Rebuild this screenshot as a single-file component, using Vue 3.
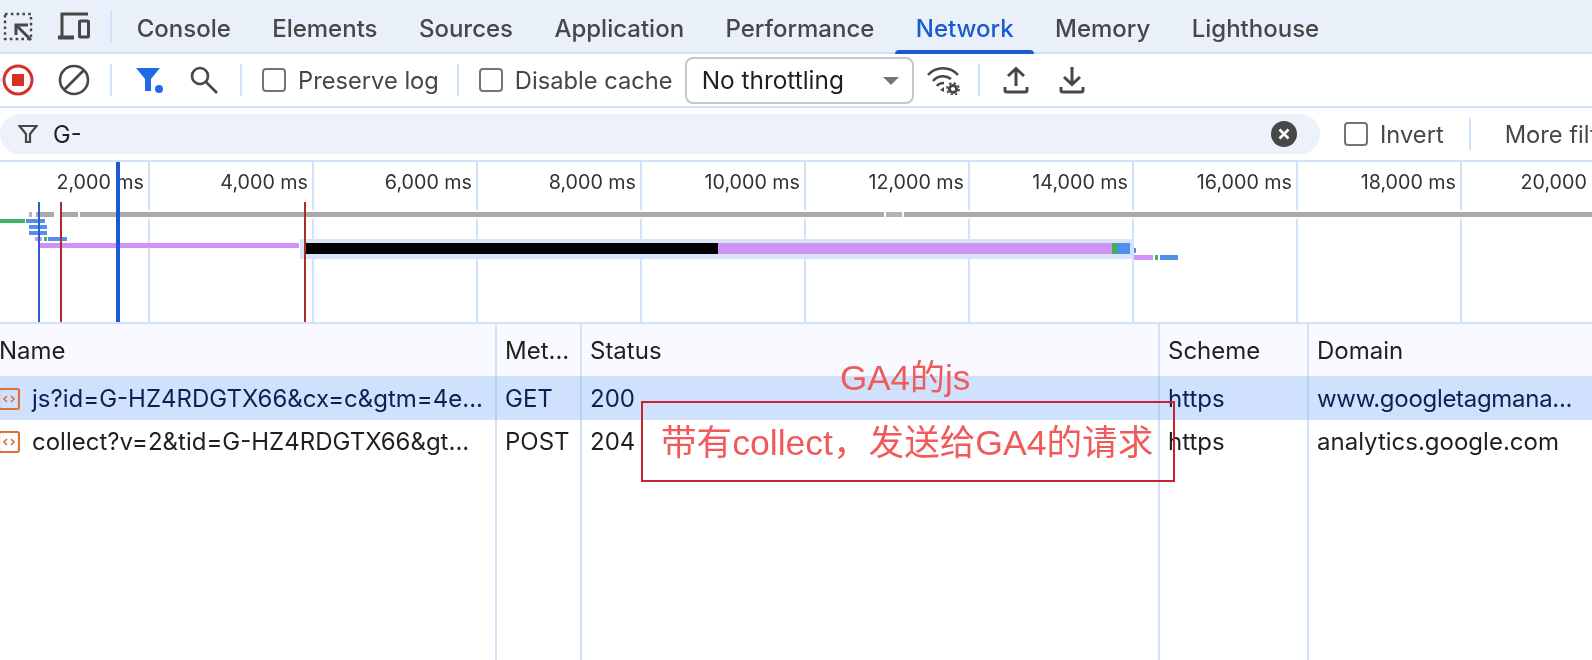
<script setup>
const tabs = ['Console', 'Elements', 'Sources', 'Application', 'Performance', 'Network', 'Memory', 'Lighthouse']
const gridLines = [148, 312, 476, 640, 804, 968, 1132, 1296, 1460]
const labels = ['2,000 ms', '4,000 ms', '6,000 ms', '8,000 ms', '10,000 ms', '12,000 ms', '14,000 ms', '16,000 ms', '18,000 ms', '20,000 ms']
const bars = [
  { x: 29, w: 3, y: 50, h: 5, c: '#b3b3b3' },
  { x: 36, w: 18, y: 50, h: 5, c: '#aaaaaa' },
  { x: 62, w: 16, y: 50, h: 5, c: '#aaaaaa' },
  { x: 80, w: 804, y: 50, h: 5, c: '#aaaaaa' },
  { x: 886, w: 16, y: 50, h: 5, c: '#b3b3b3' },
  { x: 904, w: 688, y: 50, h: 5, c: '#aaaaaa' },
  { x: 0, w: 25, y: 57, h: 4, c: '#3fb561' },
  { x: 26, w: 19, y: 57, h: 4, c: '#5390ea' },
  { x: 29, w: 18, y: 63, h: 4, c: '#5390ea' },
  { x: 29, w: 18, y: 69, h: 4, c: '#5390ea' },
  { x: 35, w: 7, y: 75, h: 4, c: '#d092f4' },
  { x: 44, w: 3, y: 75, h: 4, c: '#3fb561' },
  { x: 48, w: 19, y: 75, h: 4, c: '#5390ea' },
  { x: 40, w: 259, y: 81, h: 5, c: '#d092f4' },
  { x: 300, w: 832, y: 77, h: 20, c: '#d9e3f9' },
  { x: 306, w: 412, y: 81, h: 11, c: '#000000' },
  { x: 718, w: 394, y: 81, h: 11, c: '#d092f4' },
  { x: 1112, w: 6, y: 81, h: 11, c: '#3fae63' },
  { x: 1118, w: 12, y: 81, h: 11, c: '#4f8ff0' },
  { x: 1134, w: 2, y: 86, h: 5, c: '#5390ea' },
  { x: 1134, w: 19, y: 93, h: 5, c: '#d092f4' },
  { x: 1155, w: 3, y: 93, h: 5, c: '#3fb561' },
  { x: 1160, w: 18, y: 93, h: 5, c: '#5390ea' }
]
const markers = [
  { x: 38, w: 2, top: 40, c: '#2a5fc9' },
  { x: 60, w: 2, top: 40, c: '#ad2b2b' },
  { x: 304, w: 2, top: 40, c: '#ad2b2b' },
  { x: 116, w: 4, top: 0, c: '#1a5ccf' }
]
const columns = [
  { key: 'name', label: 'Name' },
  { key: 'method', label: 'Met...' },
  { key: 'status', label: 'Status' },
  { key: 'scheme', label: 'Scheme' },
  { key: 'domain', label: 'Domain' }
]
const rows = [
  { name: 'js?id=G-HZ4RDGTX66&cx=c&gtm=4e...', method: 'GET', status: '200', scheme: 'https', domain: 'www.googletagmana...', selected: true },
  { name: 'collect?v=2&tid=G-HZ4RDGTX66&gt...', method: 'POST', status: '204', scheme: 'https', domain: 'analytics.google.com', selected: false }
]
</script>

<template>
  <div class="page">
    <header class="tabbar">
      <svg class="ico first" width="36" height="36" viewBox="0 0 36 36" fill="none" stroke="#474747">
        <rect x="5" y="6" width="26" height="25" stroke-width="2.4" stroke-dasharray="2.6 3.2" />
        <path d="M31 32 L17 18" stroke-width="3" />
        <path d="M16 27 V17 H28" stroke-width="3" />
      </svg>
      <svg class="ico device" width="36" height="36" viewBox="0 0 36 36" fill="none" stroke="#474747">
        <path d="M6 29 V6 H32" stroke-width="3" />
        <path d="M2 29.5 H18" stroke-width="4" />
        <rect x="23.5" y="13" width="9" height="16" stroke-width="3" rx="1" />
      </svg>
      <span class="sep tab-sep"></span>
      <nav class="tabs">
        <span v-for="t in tabs" :key="t" class="tab" :class="{ active: t === 'Network' }">{{ t }}</span>
      </nav>
    </header>

    <div class="toolbar">
      <svg class="ico first" width="36" height="36" viewBox="0 0 36 36" fill="none">
        <circle cx="18" cy="18" r="14" stroke="#d0332b" stroke-width="3" />
        <rect x="12" y="12" width="12" height="12" fill="#d93025" />
      </svg>
      <svg class="ico device" width="36" height="36" viewBox="0 0 36 36" fill="none" stroke="#474747" stroke-width="2.6">
        <circle cx="18" cy="18" r="14" />
        <path d="M8 28 L28 8" />
      </svg>
      <span class="sep tab-sep"></span>
      <svg class="ico filter" width="30" height="30" viewBox="0 0 30 30">
        <path d="M2 3 H26 L17 14 V26 H11 V14 Z" fill="#1f6ae6" />
        <circle cx="25" cy="24" r="4" fill="#1f6ae6" />
      </svg>
      <svg class="ico search" width="30" height="30" viewBox="0 0 30 30" fill="none" stroke="#474747" stroke-width="2.6">
        <circle cx="12" cy="11" r="8" />
        <path d="M18 17 L29 28" />
      </svg>
      <span class="sep sep-a"></span>
      <label class="check check-a"><span class="box"></span>Preserve log</label>
      <span class="sep sep-b"></span>
      <label class="check check-b"><span class="box"></span>Disable cache</label>
      <div class="select">No throttling<span class="caret"></span></div>
      <svg class="ico wifi" width="34" height="30" viewBox="0 0 34 30" fill="none" stroke="#474747" stroke-width="2.6">
        <path d="M2 10 C10 1 24 1 32 10" />
        <path d="M7 16 C12 10 20 10 25 14" />
        <path d="M11 21 C13 18 16 18 18 18" />
        <path d="M18 22 L14 25 L18 27 Z" fill="#474747" stroke="none" />
        <circle cx="27" cy="24" r="3.6" stroke-width="3" />
        <circle cx="27" cy="24" r="6" stroke-width="1.8" stroke-dasharray="2.4 2.3" />
      </svg>
      <span class="sep sep-c"></span>
      <svg class="ico upload" width="26" height="28" viewBox="0 0 26 28" fill="none" stroke="#474747" stroke-width="3">
        <path d="M13 20 V3 M5 10 L13 2.5 L21 10" />
        <path d="M2 21 V24.5 Q2 26 4 26 H22 Q24 26 24 24.5 V21" />
      </svg>
      <svg class="ico download" width="26" height="28" viewBox="0 0 26 28" fill="none" stroke="#474747" stroke-width="3">
        <path d="M13 1 V18 M5 11 L13 18.5 L21 11" />
        <path d="M2 21 V24.5 Q2 26 4 26 H22 Q24 26 24 24.5 V21" />
      </svg>
    </div>

    <div class="filterbar">
      <div class="pill">
        <svg class="funnel" width="20" height="20" viewBox="0 0 20 20" fill="none" stroke="#474747" stroke-width="2.2">
          <path d="M1.5 2 H18.5 L12 10 V18 H8 V10 Z" />
        </svg>
        <span class="query">G-</span>
        <svg class="clear" width="26" height="26" viewBox="0 0 26 26">
          <circle cx="13" cy="13" r="13" fill="#474747" />
          <path d="M8.5 8.5 L17.5 17.5 M17.5 8.5 L8.5 17.5" stroke="#fff" stroke-width="2.6" />
        </svg>
      </div>
      <label class="check check-c"><span class="box"></span>Invert</label>
      <span class="sep sep-d"></span>
      <span class="more">More filters</span>
    </div>

    <section class="timeline">
      <div class="labels">
        <span v-for="l in labels" :key="l" class="tick">{{ l }}</span>
      </div>
      <span v-for="g in gridLines" :key="g" class="grid" :style="{ left: g + 'px' }"></span>
      <span class="halo"></span>
      <span
        v-for="(b, i) in bars"
        :key="i"
        class="bar"
        :style="{ left: b.x + 'px', width: b.w + 'px', top: b.y + 'px', height: b.h + 'px', background: b.c }"
      ></span>
      <span
        v-for="m in markers"
        :key="m.x"
        class="marker"
        :style="{ left: m.x + 'px', width: m.w + 'px', top: m.top + 'px', background: m.c }"
      ></span>
    </section>

    <section class="table">
      <div class="row head">
        <div v-for="c in columns" :key="c.key" class="cell" :class="c.key">{{ c.label }}</div>
      </div>
      <div v-for="r in rows" :key="r.name" class="row" :class="{ selected: r.selected }">
        <div class="cell name">
          <svg class="doc" width="22" height="22" viewBox="0 0 22 22" fill="none">
            <rect x="1" y="1" width="20" height="20" rx="2" stroke="#e0703a" stroke-width="2.2" />
            <path d="M9 8 L6 11 L9 14 M13 8 L16 11 L13 14" stroke="#e0703a" stroke-width="1.7" />
          </svg>
          {{ r.name }}
        </div>
        <div class="cell method">{{ r.method }}</div>
        <div class="cell status">{{ r.status }}</div>
        <div class="cell scheme">{{ r.scheme }}</div>
        <div class="cell domain">{{ r.domain }}</div>
      </div>
      <div class="row filler">
        <div v-for="c in columns" :key="c.key" class="cell" :class="c.key"></div>
      </div>
      <div class="note note-js">GA4的js</div>
      <div class="note-box">带有collect，发送给GA4的请求</div>
    </section>
  </div>
</template>

<style>
html, body { margin: 0; padding: 0; background: #fff; overflow: hidden; }
</style>

<style scoped>
.page {
  width: 1592px;
  height: 660px;
  overflow: hidden;
  display: flex;
  flex-direction: column;
  font-family: Inter, "Liberation Sans", "Noto Sans CJK SC", sans-serif;
  font-size: 23.7px;
  color: #1f1f1f;
  filter: blur(0.35px);
}
.tabbar {
  height: 52px;
  flex: none;
  display: flex;
  align-items: center;
  background: #e9f0fa;
  border-bottom: 2px solid #d3e2fb;
}
.ico { flex: none; display: block; }
.first { margin-left: 0; }
.device { margin-left: 20px; }
.sep { flex: none; width: 2px; height: 32px; background: #d3e2fb; }
.tab-sep { margin-left: 18px; }
.tabs { display: flex; align-self: stretch; margin-left: 4px; }
.tab {
  position: relative;
  padding: 5px 20.7px 0;
  display: flex;
  align-items: center;
  color: #474747;
  font-size: 24px;
  font-weight: 500;
  white-space: nowrap;
}
.tab.active { color: #1a5ccf; }
.tab.active::after {
  content: "";
  position: absolute;
  left: 0;
  right: 0;
  bottom: -2px;
  height: 4px;
  background: #1a5ccf;
  border-radius: 4px 4px 0 0;
}
.toolbar {
  height: 52px;
  flex: none;
  display: flex;
  align-items: center;
  background: #fff;
  border-bottom: 2px solid #d3e2fb;
}
.filter { margin-left: 22px; }
.search { margin-left: 24px; }
.sep-a { margin-left: 22px; }
.check {
  display: flex;
  align-items: center;
  color: #474747;
  white-space: nowrap;
}
.box {
  width: 20px;
  height: 20px;
  margin-right: 12px;
  border: 2px solid #757575;
  border-radius: 4px;
  flex: none;
}
.check-a { margin-left: 20px; }
.sep-b { margin-left: 18px; }
.check-b { margin-left: 20px; }
.select {
  position: relative;
  box-sizing: border-box;
  margin-left: 12px;
  width: 229px;
  height: 47px;
  padding-left: 15px;
  display: flex;
  align-items: center;
  border: 2px solid #c4c7c5;
  border-radius: 8px;
  color: #1f1f1f;
  font-size: 24.4px;
}
.caret {
  position: absolute;
  right: 13px;
  top: 18px;
  border-left: 8px solid transparent;
  border-right: 8px solid transparent;
  border-top: 8px solid #757575;
}
.wifi { margin-left: 12px; }
.sep-c { margin-left: 18px; }
.upload { margin-left: 23px; }
.download { margin-left: 30px; }
.filterbar {
  height: 52px;
  flex: none;
  display: flex;
  align-items: center;
  background: #fff;
  border-bottom: 2px solid #d3e2fb;
}
.pill {
  box-sizing: border-box;
  flex: none;
  width: 1320px;
  height: 40px;
  display: flex;
  align-items: center;
  background: #edf1f9;
  border-radius: 20px;
  padding-left: 18px;
  padding-right: 23px;
}
.funnel { flex: none; }
.query { margin-left: 15px; flex: 1; }
.clear { flex: none; }
.check-c { margin-left: 24px; }
.sep-d { margin-left: 25px; }
.more { margin-left: 34px; color: #474747; white-space: nowrap; }
.timeline {
  position: relative;
  height: 160px;
  flex: none;
  background: #fff;
  border-bottom: 2px solid #d3e2fb;
}
.labels {
  display: grid;
  grid-template-columns: repeat(10, 164px);
  width: 1640px;
  margin-left: -20px;
  height: 40px;
  align-items: center;
}
.tick {
  text-align: right;
  font-size: 19.7px;
  color: #333;
  white-space: nowrap;
}
.grid { position: absolute; top: 0; bottom: 0; width: 2px; background: #d3e2fb; }
.halo { position: absolute; left: 0; right: 0; top: 48px; height: 9px; background: #fff; }
.bar { position: absolute; }
.marker { position: absolute; bottom: 0; }
.table {
  position: relative;
  flex: 1;
  display: flex;
  flex-direction: column;
  background: #fff;
  font-size: 24px;
}
.row { display: flex; height: 42px; flex: none; }
.row.head { height: 52px; background: #f8faff; }
.row.selected { height: 44px; background: #d0e1fd; color: #0b2250; }
.row.filler { flex: 1; }
.cell {
  box-sizing: border-box;
  display: flex;
  align-items: center;
  white-space: nowrap;
  overflow: hidden;
  padding-left: 8px;
  padding-top: 1px;
  border-left: 2px solid #d3e2fb;
  height: 100%;
}
.row.head .cell { padding-top: 0; }
.row.head .name { text-indent: -1px; }
.row.selected .cell { border-left-color: #b8cff8; }
.row.selected .domain { letter-spacing: -0.3px; }
.cell.name { width: 495px; padding-left: 0; border-left: 0; }
.cell.method { width: 85px; }
.cell.status { width: 578px; }
.cell.scheme { width: 149px; }
.cell.domain { flex: 1; }
.doc { flex: none; margin-right: 12px; margin-left: -2px; }
.note, .note-box {
  position: absolute;
  font-family: "Liberation Sans", "Noto Sans CJK SC", sans-serif;
  color: #f05a5a;
  white-space: nowrap;
}
.note-js { left: 840px; top: 32px; line-height: 44px; font-size: 35px; }
.note-box {
  box-sizing: border-box;
  left: 641px;
  top: 77px;
  width: 534px;
  height: 81px;
  border: 2px solid #c4232f;
  padding-left: 18px;
  line-height: 81px;
  font-size: 35.6px;
}
</style>
